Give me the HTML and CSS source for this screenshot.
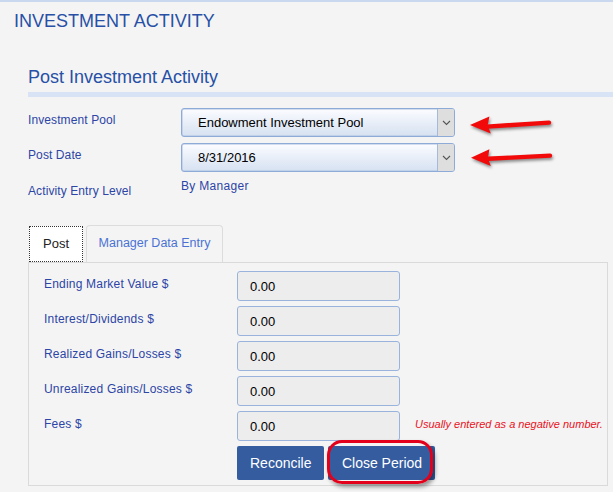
FILE: index.html
```html
<!DOCTYPE html>
<html>
<head>
<meta charset="utf-8">
<link rel="stylesheet" href="styles.css">
</head>
<body>
<div class="page">
  <h1 class="page-title">INVESTMENT ACTIVITY</h1>
  <section class="card">
    <h2 class="section-title">Post Investment Activity</h2>
    <div class="form">
      <div class="form-row">
        <label class="form-label">Investment Pool</label>
        <div class="select">
          <span class="select-value">Endowment Investment Pool</span>
          <span class="select-btn"><svg width="9" height="6" viewBox="0 0 9 6"><path d="M1 1 L4.5 4.5 L8 1" fill="none" stroke="#555" stroke-width="1.1"/></svg></span>
        </div>
      </div>
      <div class="form-row">
        <label class="form-label">Post Date</label>
        <div class="select">
          <span class="select-value">8/31/2016</span>
          <span class="select-btn"><svg width="9" height="6" viewBox="0 0 9 6"><path d="M1 1 L4.5 4.5 L8 1" fill="none" stroke="#555" stroke-width="1.1"/></svg></span>
        </div>
      </div>
      <div class="form-row">
        <label class="form-label level-label">Activity Entry Level</label>
        <span class="static-value">By Manager</span>
      </div>
    </div>

    <div class="tabs">
      <div class="tab tab-active">Post</div>
      <div class="tab tab-manager">Manager Data Entry</div>
    </div>
    <div class="panel">
      <div class="panel-row">
        <span class="panel-label">Ending Market Value $</span>
        <div class="amount">0.00</div>
      </div>
      <div class="panel-row">
        <span class="panel-label">Interest/Dividends $</span>
        <div class="amount">0.00</div>
      </div>
      <div class="panel-row">
        <span class="panel-label">Realized Gains/Losses $</span>
        <div class="amount">0.00</div>
      </div>
      <div class="panel-row">
        <span class="panel-label">Unrealized Gains/Losses $</span>
        <div class="amount">0.00</div>
      </div>
      <div class="panel-row">
        <span class="panel-label">Fees $</span>
        <div class="amount">0.00</div>
        <span class="note">Usually entered as a negative number.</span>
      </div>
      <div class="panel-actions">
        <button class="btn">Reconcile</button>
        <span class="btn-wrap">
          <button class="btn btn-close">Close Period</button>
          <span class="ring"></span>
        </span>
      </div>
    </div>
  </section>

  <svg class="arrows" width="100" height="70" viewBox="0 0 100 70">
    <line x1="27" y1="21.6" x2="89" y2="17.6" stroke="#f20a0a" stroke-width="4.4" stroke-linecap="round"/>
    <polygon points="10,20 29.4,11.6 27.6,20.4 30.8,28.4" fill="#f20a0a"/>
    <line x1="28" y1="53.8" x2="90" y2="50.6" stroke="#f20a0a" stroke-width="4.4" stroke-linecap="round"/>
    <polygon points="11,52.7 29.4,44.3 27.8,53.2 30.8,61" fill="#f20a0a"/>
  </svg>
</div>
</body>
</html>
```

FILE: styles.css
```css
html, body {
  margin: 0;
  padding: 0;
  background: #f4f4f4;
}

.page {
  position: relative;
  min-height: 492px;
  border-top: 2px solid #c9d8ee;
  box-sizing: border-box;
  font-family: "Liberation Sans", Arial, sans-serif;
}

.page-title {
  margin: 0;
  padding: 9px 14px 0;
  font-size: 18px;
  line-height: 21px;
  font-weight: normal;
  color: #2750a6;
}

.card {
  padding-left: 28px;
}

.section-title {
  margin: 35px 0 0;
  padding-bottom: 4px;
  border-bottom: 5px solid #d8e4f5;
  font-size: 18px;
  line-height: 21px;
  font-weight: normal;
  color: #2750a6;
}

.form {
  display: flex;
  flex-direction: column;
  gap: 6px;
  margin-top: 11px;
}

.form-row {
  display: flex;
  align-items: flex-start;
}

.form-label {
  width: 153px;
  flex: none;
  padding-top: 5px;
  font-size: 12px;
  line-height: 14px;
  letter-spacing: 0.1px;
  color: #2c45a6;
}

.level-label {
  padding-top: 6px;
}

.select {
  width: 274px;
  height: 29px;
  box-sizing: border-box;
  display: flex;
  align-items: stretch;
  border: 1px solid #8eaad6;
  border-radius: 3px;
  background: linear-gradient(#fbfcff, #d6e1f1);
  box-shadow: inset 0 0 0 0.5px #a9bfe2;
}

.select-value {
  flex: 1;
  padding-left: 16px;
  font-size: 13px;
  line-height: 27px;
  color: #000;
}

.select-btn {
  width: 16px;
  display: flex;
  align-items: center;
  justify-content: center;
  background: #dedede;
  border-left: 1px solid #a7b9d8;
  border-radius: 0 2px 2px 0;
}

.static-value {
  padding-top: 1px;
  font-size: 12px;
  line-height: 14px;
  letter-spacing: 0.3px;
  color: #2c45a6;
}

.tabs {
  display: flex;
  align-items: flex-end;
  gap: 3px;
  margin-top: 27px;
  padding-left: 1px;
}

.tab {
  height: 37px;
  box-sizing: border-box;
  padding: 0 12px;
  font-size: 13px;
  line-height: 35px;
  color: #4a72d4;
  border: 1px solid #dcdcdc;
  border-bottom: none;
  border-radius: 4px 4px 0 0;
  background: #f4f4f4;
}

.tab-manager {
  width: 137px;
  padding: 0;
  text-align: center;
  font-size: 12.5px;
}

.tab-active {
  width: 54px;
  height: 36px;
  padding: 0;
  text-align: center;
  color: #222;
  background: #fff;
  border: 1px dotted #333;
  border-radius: 0;
  line-height: 34px;
}

.panel {
  width: 580px;
  box-sizing: border-box;
  border: 1px solid #dadada;
  padding: 8px 0 5px 15px;
  display: flex;
  flex-direction: column;
  gap: 5px;
}

.panel-row {
  display: flex;
  align-items: flex-start;
}

.panel-label {
  width: 193px;
  flex: none;
  padding-top: 6px;
  font-size: 12px;
  line-height: 14px;
  letter-spacing: 0.2px;
  color: #2c45a6;
}

.amount {
  width: 163px;
  height: 30px;
  box-sizing: border-box;
  flex: none;
  padding: 0 12px;
  border: 1px solid #9ab3dd;
  border-radius: 3px;
  background: #ededed;
  font-size: 13px;
  line-height: 30px;
  color: #000;
}

.note {
  margin-left: 15px;
  padding-top: 7px;
  font-size: 11px;
  line-height: 13px;
  font-style: italic;
  color: #e8121c;
}

.panel-actions {
  display: flex;
  gap: 4px;
  padding-left: 193px;
}

.btn {
  height: 34px;
  margin: 0;
  padding: 0 13px;
  border: none;
  border-radius: 2px;
  background: #345c9f;
  color: #fff;
  font-family: "Liberation Sans", Arial, sans-serif;
  font-size: 14px;
}

.btn-close {
  width: 107px;
  padding: 0;
}

.btn-wrap {
  position: relative;
  display: flex;
}

.ring {
  position: absolute;
  left: -1px;
  right: 2px;
  top: -6px;
  bottom: -4px;
  border: 3.5px solid #e3001b;
  border-radius: 15px;
  box-shadow: 2px 3px 4px rgba(0, 0, 0, 0.4);
  pointer-events: none;
}

.arrows {
  position: absolute;
  left: 460px;
  top: 103px;
  filter: drop-shadow(1px 2px 1.5px rgba(0, 0, 0, 0.45));
}
```
